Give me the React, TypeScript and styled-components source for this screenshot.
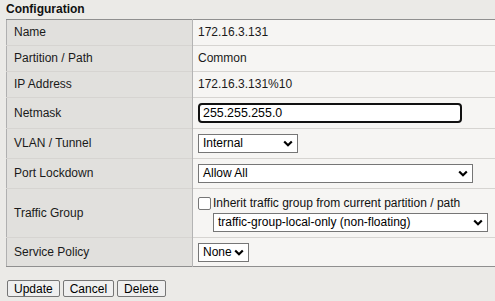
import React from "react";
import styled, { createGlobalStyle } from "styled-components";

const Global = createGlobalStyle`
  html, body { margin: 0; padding: 0; overflow: hidden; }
  body {
    background: #ebeae7;
    font-family: "Liberation Sans", Arial, sans-serif;
    font-size: 12px;
    color: #1a1a1a;
  }
`;

const Page = styled.div`
  width: 495px;
  display: flex;
  flex-direction: column;
  & > * { flex-shrink: 0; }
`;

const Title = styled.div`
  height: 19px;
  padding-left: 6px;
  display: flex;
  align-items: center;
  font-weight: bold;
  font-size: 12px;
  color: #111;
  line-height: 14px;
  padding-bottom: 1px;
  box-sizing: border-box;
`;

const Table = styled.table`
  margin-left: 6px;
  width: calc(100% - 6px);
  border-collapse: collapse;
  border-top: 1px solid #8f8f8f;
  border-bottom: 1px solid #8f8f8f;
  border-left: 1px solid #b0b0b0;
`;

const Row = styled.tr`
  border-bottom: 1px solid #d6d4d1;
  &:last-child { border-bottom: none; }
  &:last-child > td { padding-bottom: 4px; }
`;

const Label = styled.td`
  width: 171px;
  background: #e1e0dd;
  border-right: 1px solid #b4b4b4;
  padding: 5px 7px;
  line-height: 15px;
  vertical-align: middle;
  white-space: nowrap;
`;

const Value = styled.td`
  background: #f6f5f3;
  padding: 5px 5px;
  line-height: 15px;
  vertical-align: middle;
  white-space: nowrap;
`;

const TextInput = styled.div`
  width: 264px;
  height: 20px;
  box-sizing: border-box;
  border: 2px solid #111;
  border-radius: 4px;
  background: #fff;
  padding: 0 3px;
  display: flex;
  align-items: center;
  font-size: 12.4px;
  color: #000;
`;

const SelectBox = styled.div<{ $width: number; $indent?: number }>`
  width: ${(p) => p.$width}px;
  margin-left: ${(p) => p.$indent ?? 0}px;
  height: 19px;
  box-sizing: border-box;
  border: 1px solid #767676;
  background: #fff;
  display: flex;
  align-items: center;
  justify-content: space-between;
  padding: 0 4px 0 4px;
  font-size: 12px;
  color: #000;
`;

const CheckRow = styled.label`
  display: flex;
  align-items: center;
  gap: 2px;
  height: 19px;
  font-size: 12px;
  color: #111;
`;

const Checkbox = styled.span`
  width: 13px;
  height: 13px;
  box-sizing: border-box;
  border: 1px solid #767676;
  border-radius: 2px;
  background: #fff;
  display: inline-block;
`;

const Stack = styled.div`
  display: flex;
  flex-direction: column;
`;

const Buttons = styled.div`
  display: flex;
  gap: 3px;
  margin: 13px 0 0 7px;
`;

const Button = styled.button`
  font-family: "Liberation Sans", Arial, sans-serif;
  font-size: 12px;
  line-height: 14px;
  height: 17px;
  padding: 0 6px;
  border: 1px solid #767676;
  border-radius: 2px;
  background: #efefef;
  color: #000;
`;

const Chevron = () => (
  <svg width="10" height="7" viewBox="0 0 10 7">
    <polyline points="1.2,1.5 5,5.2 8.8,1.5" fill="none" stroke="#000" strokeWidth="2.2" />
  </svg>
);

const Select = ({ value, width, indent }: { value: string; width: number; indent?: number }) => (
  <SelectBox $width={width} $indent={indent}>
    <span>{value}</span>
    <Chevron />
  </SelectBox>
);

export default function App() {
  return (
    <Page>
      <Global />
      <Title>Configuration</Title>
      <Table>
        <tbody>
          <Row>
            <Label>Name</Label>
            <Value>172.16.3.131</Value>
          </Row>
          <Row>
            <Label>Partition / Path</Label>
            <Value>Common</Value>
          </Row>
          <Row>
            <Label>IP Address</Label>
            <Value>172.16.3.131%10</Value>
          </Row>
          <Row>
            <Label>Netmask</Label>
            <Value>
              <TextInput>255.255.255.0</TextInput>
            </Value>
          </Row>
          <Row>
            <Label>VLAN / Tunnel</Label>
            <Value>
              <Select value="Internal" width={100} />
            </Value>
          </Row>
          <Row>
            <Label>Port Lockdown</Label>
            <Value>
              <Select value="Allow All" width={275} />
            </Value>
          </Row>
          <Row>
            <Label>Traffic Group</Label>
            <Value>
              <Stack>
                <CheckRow>
                  <Checkbox />
                  Inherit traffic group from current partition / path
                </CheckRow>
                <Select value="traffic-group-local-only (non-floating)" width={275} indent={15} />
              </Stack>
            </Value>
          </Row>
          <Row>
            <Label>Service Policy</Label>
            <Value>
              <Select value="None" width={51} />
            </Value>
          </Row>
        </tbody>
      </Table>
      <Buttons>
        <Button>Update</Button>
        <Button>Cancel</Button>
        <Button>Delete</Button>
      </Buttons>
    </Page>
  );
}
